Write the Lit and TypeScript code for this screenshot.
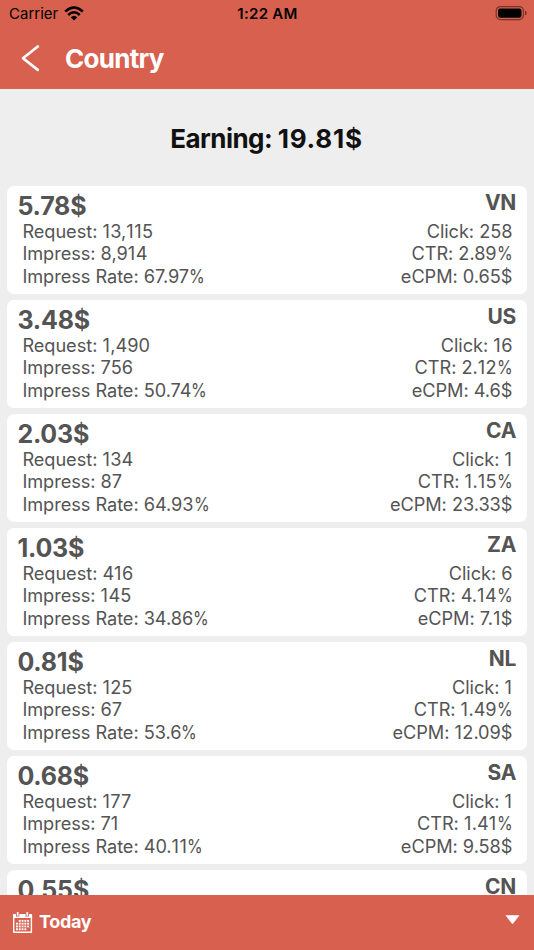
import { LitElement, html, css, svg } from "lit";
import { customElement, property } from "lit/decorators.js";

interface Country {
  code: string;
  earning: string;
  request: string;
  impress: string;
  rate: string;
  click: string;
  ctr: string;
  ecpm: string;
}

const COUNTRIES: Country[] = [
  { code: "VN", earning: "5.78$", request: "13,115", impress: "8,914", rate: "67.97%", click: "258", ctr: "2.89%", ecpm: "0.65$" },
  { code: "US", earning: "3.48$", request: "1,490", impress: "756", rate: "50.74%", click: "16", ctr: "2.12%", ecpm: "4.6$" },
  { code: "CA", earning: "2.03$", request: "134", impress: "87", rate: "64.93%", click: "1", ctr: "1.15%", ecpm: "23.33$" },
  { code: "ZA", earning: "1.03$", request: "416", impress: "145", rate: "34.86%", click: "6", ctr: "4.14%", ecpm: "7.1$" },
  { code: "NL", earning: "0.81$", request: "125", impress: "67", rate: "53.6%", click: "1", ctr: "1.49%", ecpm: "12.09$" },
  { code: "SA", earning: "0.68$", request: "177", impress: "71", rate: "40.11%", click: "1", ctr: "1.41%", ecpm: "9.58$" },
  { code: "CN", earning: "0.55$", request: "", impress: "", rate: "", click: "", ctr: "", ecpm: "" },
];

@customElement("country-card")
export class CountryCard extends LitElement {
  @property({ attribute: false }) item!: Country;

  static styles = css`
    :host {
      display: block;
      flex: none;
      box-sizing: border-box;
      height: 107.6px;
      padding: 4px 11px 0;
      background: #fff;
      border-radius: 7px;
      color: #545454;
    }
    .top {
      display: flex;
      justify-content: space-between;
      align-items: flex-start;
      height: 30px;
      font-weight: 700;
    }
    .earning {
      font-size: 25px;
      line-height: 32px;
      letter-spacing: -0.2px;
      margin-left: -0.6px;
    }
    .code {
      font-size: 21px;
      line-height: 26px;
      letter-spacing: -0.2px;
      margin-right: -0.2px;
    }
    .stats {
      display: flex;
      justify-content: space-between;
      padding: 0 3.6px 0 4.4px;
      font-size: 18.2px;
      line-height: 22.3px;
      letter-spacing: -0.05px;
      white-space: nowrap;
    }
    .right {
      text-align: right;
    }
    .one {
      letter-spacing: 0.5px;
    }
    .pct {
      display: inline-block;
      transform: scaleX(0.88);
      transform-origin: left;
      margin-right: -2px;
    }
  `;

  /* Gives the narrow "1" some air and sets the percent sign condensed. */
  private value(text: string) {
    return [...text].map((ch) =>
      ch === "1" ? html`<span class="one">1</span>` : ch === "%" ? html`<span class="pct">%</span>` : ch
    );
  }

  render() {
    const c = this.item;
    return html`
      <div class="top">
        <div class="earning">${c.earning}</div>
        <div class="code">${c.code}</div>
      </div>
      ${c.request
        ? html`<div class="stats">
            <div>
              <div>Request: ${this.value(c.request)}</div>
              <div>Impress: ${this.value(c.impress)}</div>
              <div>Impress Rate: ${this.value(c.rate)}</div>
            </div>
            <div class="right">
              <div>Click: ${this.value(c.click)}</div>
              <div>CTR: ${this.value(c.ctr)}</div>
              <div>eCPM: ${this.value(c.ecpm)}</div>
            </div>
          </div>`
        : null}
    `;
  }
}

@customElement("app-root")
export class AppRoot extends LitElement {
  static styles = css`
    :host {
      display: flex;
      flex-direction: column;
      height: 950px;
      overflow: hidden;
      background: #eee;
      font-family: Inter, "Liberation Sans", sans-serif;
    }
    svg {
      display: block;
      flex: none;
    }
    header {
      flex: none;
      height: 89px;
      background: #d8604e;
    }
    .status {
      display: grid;
      grid-template-columns: 1fr auto 1fr;
      align-items: center;
      height: 28px;
      padding: 0 7px 0 9px;
      font-size: 15px;
      line-height: 28px;
      color: #000;
    }
    .carrier {
      display: flex;
      align-items: center;
      gap: 6px;
    }
    .wifi {
      margin-bottom: 2px;
    }
    .clock {
      font-weight: 600;
      letter-spacing: 0.3px;
      margin-right: 1px;
    }
    .battery {
      justify-self: end;
    }
    .nav {
      display: flex;
      align-items: center;
      gap: 25px;
      height: 60px;
      padding-left: 20px;
      color: #fff;
    }
    .title {
      font-size: 26px;
      font-weight: 700;
      line-height: 60px;
      letter-spacing: -0.7px;
      padding-top: 1px;
    }
    .total {
      flex: none;
      height: 97px;
      padding: 1px 1px 0 0;
      box-sizing: border-box;
      text-align: center;
      font-size: 26px;
      font-weight: 700;
      line-height: 98px;
      color: #111;
    }
    .label {
      letter-spacing: -0.55px;
    }
    .sum {
      letter-spacing: 0.75px;
    }
    .list {
      flex: 1;
      min-height: 0;
      display: flex;
      flex-direction: column;
      gap: 6.4px;
      padding: 0 7px;
      overflow: hidden;
    }
    footer {
      flex: none;
      display: flex;
      align-items: center;
      height: 55px;
      box-sizing: border-box;
      padding: 0 14px 2px 12px;
      background: #d8604e;
      color: #fff;
    }
    .range {
      flex: 1;
      margin-left: 6px;
      font-size: 18px;
      font-weight: 700;
      line-height: 53px;
      letter-spacing: -0.35px;
    }
    .calendar {
      margin-top: 2px;
    }
    .arrow {
      margin-bottom: 3px;
    }
  `;

  private calendar() {
    const dots = [];
    for (let r = 0; r < 4; r++) {
      for (let c = 0; c < 5; c++) {
        if ((r === 0 && c === 0) || (r === 3 && c === 4)) continue;
        dots.push(svg`<rect x=${4 + c * 2.8} y=${7.9 + r * 2.8} width="1.9" height="1.9" fill="#fff" />`);
      }
    }
    return svg`
      <path d="M1.7 3.2V20.2H19.4V3.2" fill="none" stroke="#fff" stroke-width="1.4" stroke-linejoin="round" />
      <path d="M1 2H4V4.6H7.4V2H13.6V4.6H17V2H20.1V6H1Z" fill="#fff" />
      <path d="M5.7 0V3.8M15.3 0V3.8" fill="none" stroke="#fff" stroke-width="1.7" />
      ${dots}`;
  }

  render() {
    return html`
      <header>
        <div class="status">
          <div class="carrier">
            <span>Carrier</span>
            <svg class="wifi" width="20" height="15" viewBox="0 0 20 15">
              <g fill="none" stroke="#000" stroke-width="2.5">
                <path d="M1.2 5.5Q10 -2.5 18.8 5.5" />
                <path d="M4.2 9Q10 3.4 15.8 9" />
              </g>
              <path d="M6.7 11.2Q10 8.2 13.3 11.2L10 14.4Z" fill="#000" />
            </svg>
          </div>
          <div class="clock">1:22 AM</div>
          <svg class="battery" width="32" height="16" viewBox="0 0 32 16">
            <rect x="1.2" y="0.6" width="27.2" height="13" rx="4" fill="none" stroke="#000" stroke-opacity=".45" stroke-width="1.2" />
            <rect x="3.1" y="2.5" width="23.4" height="9.3" rx="2" fill="#000" />
            <path d="M30 4.6Q31.7 5.4 31.7 7.1T30 9.6Z" fill="#000" fill-opacity=".5" />
          </svg>
        </div>
        <div class="nav">
          <svg width="20" height="28" viewBox="0 0 20 28">
            <path d="M17.8 2.5L3 14.2L17.8 25.9" fill="none" stroke="#fff" stroke-width="2.7" stroke-linecap="round" stroke-linejoin="round" />
          </svg>
          <div class="title">Country</div>
        </div>
      </header>
      <div class="total"><span class="label">Earning: </span><span class="sum">19.81$</span></div>
      <div class="list">${COUNTRIES.map((c) => html`<country-card .item=${c}></country-card>`)}</div>
      <footer>
        <svg class="calendar" width="21" height="21" viewBox="0 0 21 21">${this.calendar()}</svg>
        <div class="range">Today</div>
        <svg class="arrow" width="15" height="10" viewBox="0 0 15 10"><path d="M1 .6H14L7.5 8.9Z" fill="#fff" stroke="#fff" stroke-width=".6" stroke-linejoin="round" /></svg>
      </footer>
    `;
  }
}
